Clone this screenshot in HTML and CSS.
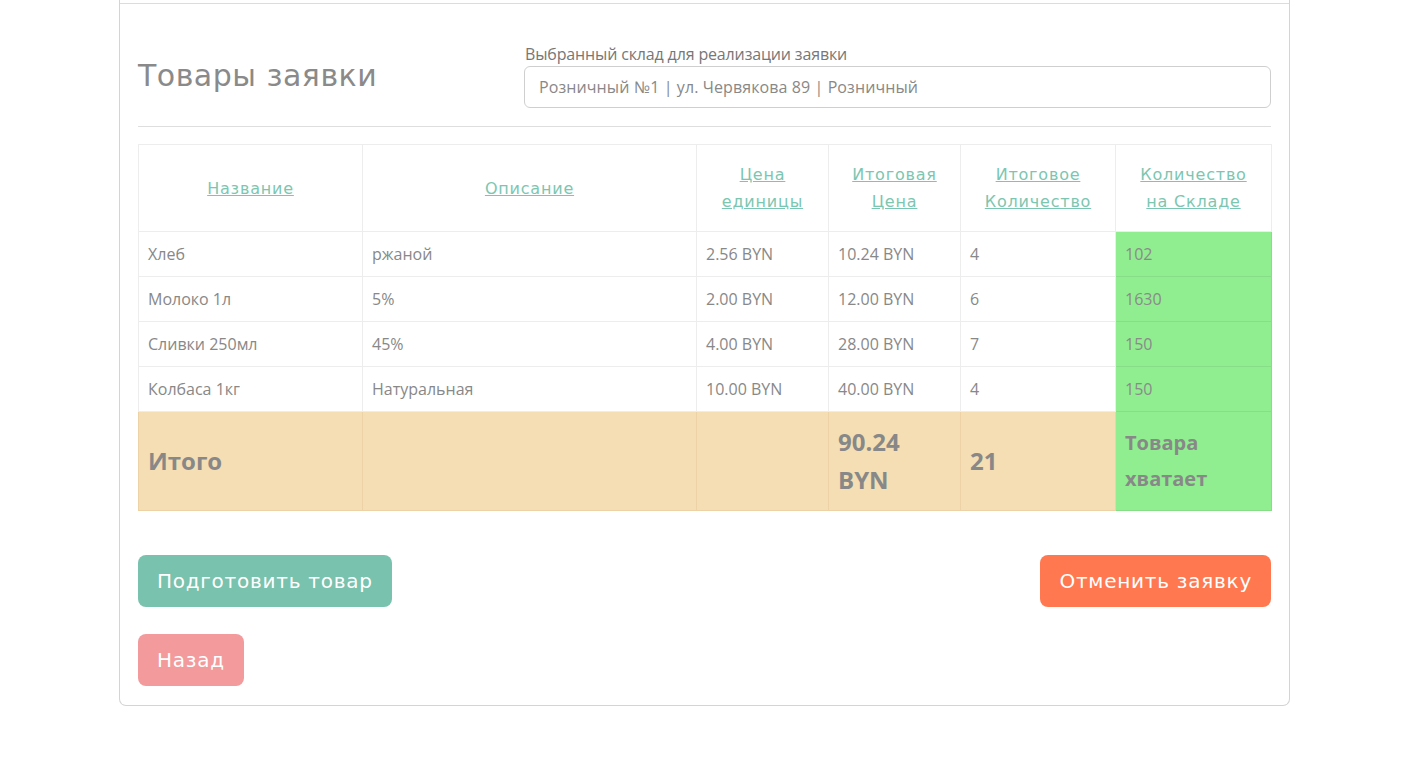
FILE: index.html
```html
<!DOCTYPE html>
<html lang="ru">
<head>
<meta charset="utf-8">
<title>Товары заявки</title>
<link rel="stylesheet" href="styles.css">
</head>
<body>
<div class="card">
  <div class="card-top"></div>
  <div class="card-body">
    <div class="head">
      <h2 class="title">Товары заявки</h2>
      <div class="field">
        <label class="label">Выбранный склад для реализации заявки</label>
        <div class="input">Розничный №1 | ул. Червякова 89 | Розничный</div>
      </div>
    </div>
    <hr class="sep">
    <table class="items">
      <colgroup>
        <col class="c1"><col class="c2"><col class="c3"><col class="c4"><col class="c5"><col class="c6">
      </colgroup>
      <thead>
        <tr>
          <th><a href="#">Название</a></th>
          <th><a href="#">Описание</a></th>
          <th><a href="#">Цена единицы</a></th>
          <th><a href="#">Итоговая Цена</a></th>
          <th><a href="#">Итоговое Количество</a></th>
          <th><a href="#">Количество на Складе</a></th>
        </tr>
      </thead>
      <tbody>
        <tr><td>Хлеб</td><td>ржаной</td><td>2.56 BYN</td><td>10.24 BYN</td><td>4</td><td class="ok">102</td></tr>
        <tr><td>Молоко 1л</td><td>5%</td><td>2.00 BYN</td><td>12.00 BYN</td><td>6</td><td class="ok">1630</td></tr>
        <tr><td>Сливки 250мл</td><td>45%</td><td>4.00 BYN</td><td>28.00 BYN</td><td>7</td><td class="ok">150</td></tr>
        <tr><td>Колбаса 1кг</td><td>Натуральная</td><td>10.00 BYN</td><td>40.00 BYN</td><td>4</td><td class="ok">150</td></tr>
        <tr class="total">
          <td class="big">Итого</td><td></td><td></td>
          <td class="big">90.24 BYN</td>
          <td class="big">21</td>
          <td class="ok status">Товара хватает</td>
        </tr>
      </tbody>
    </table>
    <div class="actions">
      <button class="btn btn-teal">Подготовить товар</button>
      <button class="btn btn-coral">Отменить заявку</button>
    </div>
    <div class="actions-back">
      <button class="btn btn-pink">Назад</button>
    </div>
  </div>
</div>
</body>
</html>
```

FILE: styles.css
```css
html, body {
  margin: 0;
  padding: 0;
  background: #fff;
}
body {
  font-family: "Open Sans", "Noto Sans", sans-serif;
  color: #888;
}
.card {
  box-sizing: border-box;
  width: 1171px;
  margin-left: 119px;
  border: 1px solid #d4d4d4;
  border-top: none;
  border-radius: 0 0 7px 7px;
}
.card-top {
  height: 3px;
  border-bottom: 1px solid #dcdcdc;
}
.card-body {
  padding: 0 18px 19px;
}
.head {
  display: grid;
  grid-template-columns: 386px 1fr;
  align-items: center;
  padding-top: 38px;
}
.title {
  margin: 0;
  font-family: "DejaVu Sans", sans-serif;
  font-weight: normal;
  font-size: 30px;
  color: #8a8a8a;
  letter-spacing: 0.5px;
}
.field {
  display: flex;
  flex-direction: column;
}
.label {
  font-size: 16px;
  line-height: 24px;
  color: #777;
  padding-left: 1px;
  letter-spacing: -0.15px;
}
.input {
  box-sizing: border-box;
  height: 42px;
  border: 1px solid #cfcfcf;
  border-radius: 6px;
  padding: 0 14px;
  display: flex;
  align-items: center;
  font-size: 16px;
  color: #888;
  letter-spacing: 0.1px;
}
.sep {
  margin: 18px 0 17px;
  border: none;
  border-top: 1px solid #dedede;
}
.items {
  width: 100%;
  border-collapse: collapse;
  table-layout: fixed;
  font-size: 16px;
}
.c1 { width: 224px; }
.c2 { width: 334px; }
.c3 { width: 132px; }
.c4 { width: 132px; }
.c5 { width: 155px; }
.c6 { width: 156px; }
.items th, .items td {
  border: 1px solid #ededed;
}
.items th {
  height: 86px;
  font-weight: normal;
  text-align: center;
  padding: 0 14px;
  line-height: 26px;
}
.items th a {
  font-family: "DejaVu Sans", sans-serif;
  font-size: 16px;
  letter-spacing: 0.8px;
  color: #7cc6b1;
  text-decoration: underline;
}
.items td {
  height: 44px;
  padding: 0 9px;
  color: #888;
  letter-spacing: 0;
}
.items td.ok {
  background: #90ee90;
  border-color: #86df86;
  color: #8a8a8a;
}
.items tr.total td {
  background: #f5deb3;
  border-color: #ecd2a4;
  height: 98px;
  font-weight: bold;
  color: #888;
}
.items tr.total td.big {
  font-size: 24px;
  line-height: 38px;
}
.items tr.total td.ok {
  background: #90ee90;
  border-color: #86df86;
}
.items tr.total td.status {
  font-size: 20px;
  line-height: 36px;
}
.actions {
  display: flex;
  justify-content: space-between;
  margin-top: 44px;
}
.actions-back {
  margin-top: 27px;
}
.btn {
  height: 52px;
  border: none;
  border-radius: 8px;
  padding: 0 19px;
  font-family: "DejaVu Sans", sans-serif;
  font-size: 20px;
  letter-spacing: 0.75px;
  color: #fff;
  cursor: pointer;
}
.btn-teal { background: #79c2ad; }
.btn-coral { background: #ff7850; }
.btn-pink { background: #f29a9c; }
```
